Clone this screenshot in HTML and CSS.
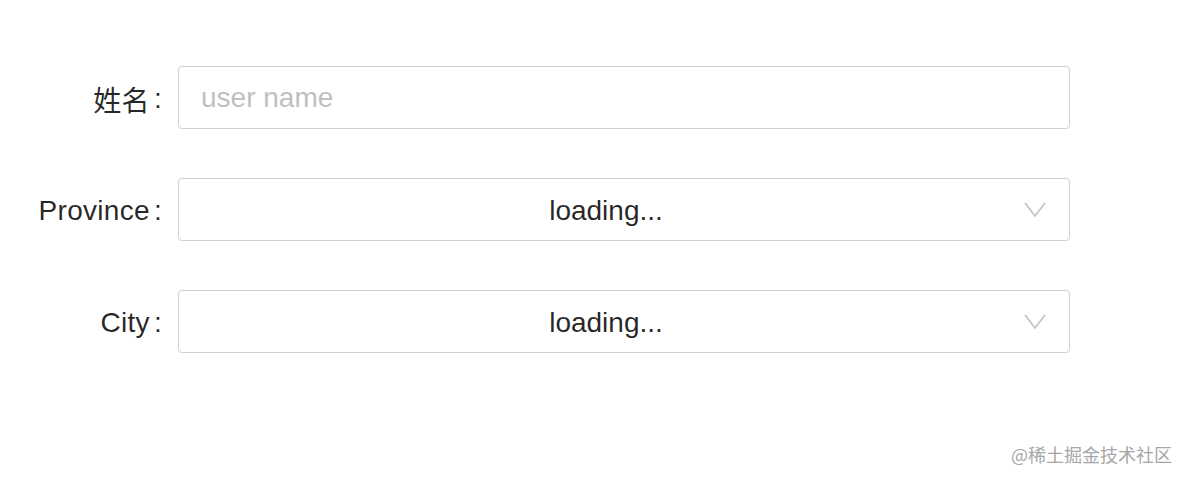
FILE: index.html
```html
<!DOCTYPE html>
<html lang="zh">
<head>
  <meta charset="UTF-8">
  <title>Form</title>
  <link rel="stylesheet" href="styles.css">
</head>
<body>
  <form class="form">
    <label class="label" for="name">姓名</label>
    <input class="field" id="name" type="text" placeholder="user name">

    <label class="label">Province</label>
    <div class="field select">
      <span class="select-value">loading...</span>
      <svg class="arrow" width="22" height="16" viewBox="0 0 22 16"><path d="M1 2 L11 15 L21 2" fill="none" stroke="#bfbfbf" stroke-width="1.6"/></svg>
    </div>

    <label class="label">City</label>
    <div class="field select">
      <span class="select-value">loading...</span>
      <svg class="arrow" width="22" height="16" viewBox="0 0 22 16"><path d="M1 2 L11 15 L21 2" fill="none" stroke="#bfbfbf" stroke-width="1.6"/></svg>
    </div>
  </form>
  <div class="watermark">@稀土掘金技术社区</div>
</body>
</html>
```

FILE: styles.css
```css
body {
  margin: 0;
  height: 484px;
  overflow: hidden;
  position: relative;
  background: #fff;
  font-family: 'Liberation Sans', 'Noto Sans CJK SC', Arial, sans-serif;
  color: rgba(0, 0, 0, 0.85);
}
.form {
  display: grid;
  grid-template-columns: 162px 892px;
  grid-auto-rows: 63px;
  column-gap: 16px;
  row-gap: 49px;
  padding-top: 66px;
}
.label {
  display: flex;
  align-items: center;
  justify-content: flex-end;
  font-size: 28px;
  letter-spacing: 0.3px;
  padding-top: 2px;
}
.label::after {
  content: ':';
  margin-left: 4px;
}
.field {
  box-sizing: border-box;
  height: 63px;
  border: 1px solid #d0d0d0;
  border-radius: 4px;
  font-family: inherit;
  font-size: 28px;
  padding: 0 22px;
  color: rgba(0, 0, 0, 0.85);
  outline: none;
}
.field::placeholder {
  color: #bfbfbf;
}
.select {
  position: relative;
  display: flex;
  align-items: center;
  justify-content: center;
  padding: 3px 58px 0 22px;
}
.arrow {
  position: absolute;
  right: 23px;
  top: 22px;
}
.watermark {
  position: absolute;
  right: 16px;
  bottom: 17px;
  font-size: 18px;
  color: #a6a6a6;
  font-family: 'Noto Sans CJK SC', sans-serif;
  text-shadow: 0 0 1px #fff;
}
```
